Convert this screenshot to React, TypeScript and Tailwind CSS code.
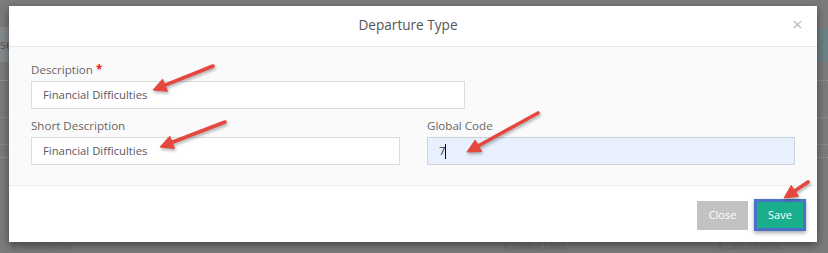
import React from "react";

type Arrow = { x1: number; y1: number; x2: number; y2: number };

const arrows: Arrow[] = [
  { x1: 213, y1: 66, x2: 153, y2: 90 },
  { x1: 225, y1: 122, x2: 160, y2: 147 },
  { x1: 538, y1: 113, x2: 467, y2: 152 },
  { x1: 808, y1: 182, x2: 784, y2: 198 },
];

function ArrowShape({ a }: { a: Arrow }) {
  const dx = a.x2 - a.x1;
  const dy = a.y2 - a.y1;
  const len = Math.hypot(dx, dy);
  const ux = dx / len;
  const uy = dy / len;
  const hl = 13;
  const hw = 6.5;
  const bx = a.x2 - ux * hl;
  const by = a.y2 - uy * hl;
  const nx = -uy;
  const ny = ux;
  const pts = `${a.x2},${a.y2} ${bx + nx * hw},${by + ny * hw} ${bx - nx * hw},${by - ny * hw}`;
  return (
    <g>
      <line x1={a.x1} y1={a.y1} x2={bx + ux * 2} y2={by + uy * 2} stroke="#e5463d" strokeWidth={3.6} strokeLinecap="round" />
      <polygon points={pts} fill="#e5463d" stroke="#e5463d" strokeWidth={1} strokeLinejoin="round" />
    </g>
  );
}

export default function App() {
  return (
    <div
      className="relative w-[828px] h-[253px] overflow-hidden bg-[#7b7b7b]"
      style={{ fontFamily: '"Open Sans", "Noto Sans", Arial, sans-serif' }}
    >
      {/* dimmed page behind */}
      <div className="flex flex-col">
        <div className="h-[27px]" />
        <div className="flex h-[35px]">
          <div className="flex-1 bg-[#868b8e] flex items-center">
            <span className="text-[12px] text-[#4d5256]">se</span>
          </div>
          <div className="flex-1 bg-[#6d8085]" />
        </div>
        <div className="h-[19px] border-b border-dotted border-[#9a9a9a]" />
        <div className="h-[37px] border-b border-[#8a8a8a]" />
        <div className="h-[27px] border-b border-[#8a8a8a]" />
        <div className="h-[13px] border-b border-dotted border-[#9a9a9a]" />
        <div className="flex pt-[83px] text-[9px] leading-[10px] text-[#727272] font-bold">
          <span className="ml-[10px]">⇅ Description</span>
          <span className="ml-[430px]">⇅ Global Code</span>
          <span className="ml-[150px]">⇅ Last Change</span>
        </div>
      </div>

      {/* modal */}
      <div className="absolute left-[9px] top-[6px] w-[808px] h-[236px] bg-white shadow-[0_3px_9px_rgba(0,0,0,0.45)] flex flex-col">
        <div className="h-[41px] flex items-center px-[15px] border-b border-[#e5e5e5]">
          <div className="flex-1 text-center text-[13.6px] text-[#555555] pb-[1px]">Departure Type</div>
          <div className="w-[10px] text-[19px] leading-none text-[#bdbdbd] -mt-[3px]">×</div>
        </div>
        <div className="bg-[#fafafa] pl-[22px] pr-[22px] pt-[14px] h-[139px] border-b border-[#ececec]">
          <div className="text-[11.6px] leading-[17px] text-[#666666]">
            Description <span className="text-[#e32020] font-bold">*</span>
          </div>
          <div className="mt-[3px] w-[434px] h-[28px] border border-[#dcdcdc] bg-white flex items-center pl-[11px] text-[11.3px] text-[#5a5563]">
            Financial Difficulties
          </div>
          <div className="mt-[8px] flex gap-[27px]">
            <div className="w-[369px]">
              <div className="text-[11.6px] leading-[17px] text-[#666666]">Short Description</div>
              <div className="mt-[3px] h-[28px] border border-[#dcdcdc] bg-white flex items-center pl-[11px] text-[11.3px] text-[#5a5563]">
                Financial Difficulties
              </div>
            </div>
            <div className="w-[368px]">
              <div className="text-[11.6px] leading-[17px] text-[#666666]">Global Code</div>
              <div className="mt-[3px] h-[28px] border border-[#cbd3de] bg-[#e8f0fe] flex items-center pl-[11px] text-[11.3px] text-[#333]">
                <span>7</span>
                <span className="w-[1px] h-[15px] bg-black" />
              </div>
            </div>
          </div>
        </div>
        <div className="flex-1 flex items-center justify-end pr-[11px] gap-[6px] pt-[2px]">
          <div className="w-[51px] h-[29px] bg-[#c2c2c2] text-white text-[11px] flex items-center justify-center">Close</div>
          <div className="w-[52px] h-[32px] border-[3px] border-[#4a72c9] bg-[#19ae8c] text-white text-[11px] flex items-center justify-center shadow-[0_2px_4px_rgba(0,0,0,0.35)]">
            Save
          </div>
        </div>
      </div>

      {/* annotation arrows */}
      <svg className="absolute inset-0 pointer-events-none drop-shadow-[1px_2px_1.5px_rgba(0,0,0,0.3)]" width={828} height={253}>
        {arrows.map((a, i) => (
          <ArrowShape key={i} a={a} />
        ))}
      </svg>
    </div>
  );
}
